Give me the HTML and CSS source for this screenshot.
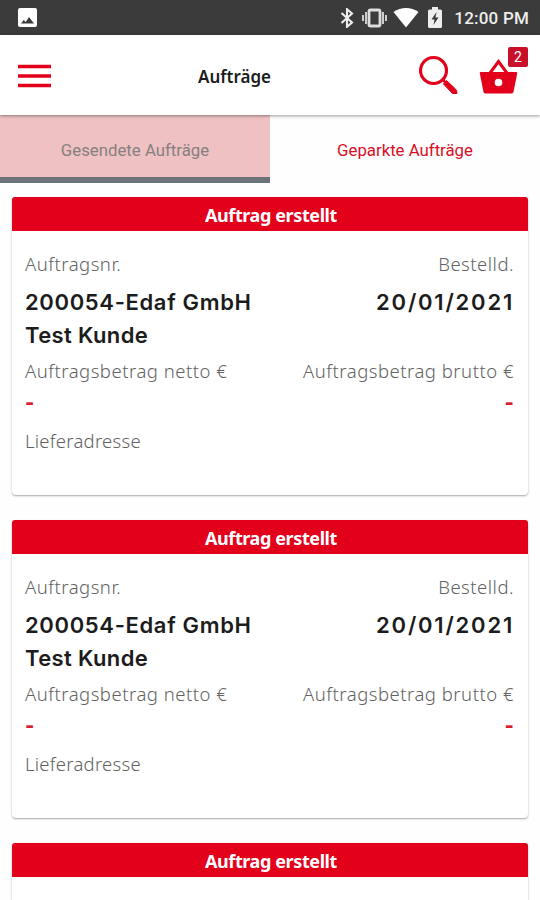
FILE: index.html
```html
<!DOCTYPE html>
<html lang="de">
<head>
  <meta charset="UTF-8">
  <title>Aufträge</title>
  <link rel="stylesheet" href="styles.css">
</head>
<body>
  <div class="statusbar">
    <svg class="status-photo" width="19" height="19" viewBox="0 0 19 19">
      <rect width="19" height="19" rx="2" fill="#fff"/>
      <path d="M3 15.500l2.700-3.500 2 2 3.300-5L16 15.500z" fill="#3a3b3a"/>
    </svg>
    <div class="status-right">
      <svg width="14" height="20" viewBox="0 0 14 20">
        <path d="M1.500 5l10.500 9.500L7 18.800V1.200L12 5.500 1.500 15" fill="none" stroke="#eee" stroke-width="2.100"/>
      </svg>
      <svg class="status-vibrate" width="25" height="20" viewBox="0 0 25 20">
        <rect x="7" y="2" width="11" height="16" rx="1.500" fill="none" stroke="#ddd" stroke-width="2.800"/>
        <path d="M4 4v12M21 4v12M1 7v6M24 7v6" stroke="#ccc" stroke-width="2"/>
      </svg>
      <svg class="status-wifi" width="26" height="20" viewBox="0 0 26 20">
        <path d="M.5 4C8-1.200 18-1.200 25.500 4L13 19.500z" fill="#fff"/>
      </svg>
      <svg class="status-battery" width="14" height="21" viewBox="0 0 14 21">
        <path d="M4 0h6v2.500h2.500Q14 2.500 14 4v15.500Q14 21 12.500 21h-11Q0 21 0 19.500V4Q0 2.500 1.500 2.500H4z" fill="#eee"/>
        <path d="M8.500 5L3.500 12.500h3L5.500 18l5-7.500h-3z" fill="#3a3b3a"/>
      </svg>
      <span class="clock">12:00 PM</span>
    </div>
  </div>

  <header class="header">
    <svg class="menu" width="33" height="24" viewBox="0 0 33 24">
      <path d="M0 2.500h33M0 12h33M0 21.500h33" stroke="#e3001b" stroke-width="3.400"/>
    </svg>
    <h1>Aufträge</h1>
    <svg class="search" width="40" height="40" viewBox="0 0 40 40">
      <circle cx="14.500" cy="15.500" r="13" fill="none" stroke="#e3001b" stroke-width="3.200"/>
      <path d="M27.500 25.500l9 8.500q1.500 1.500 1.500 4.500h-4.500l-9-9.500z" fill="#e3001b" stroke="#e3001b" stroke-linejoin="round"/>
      <path d="M23.500 24.500l4 4" stroke="#e3001b" stroke-width="2.500"/>
    </svg>
    <div class="basket">
      <svg width="39" height="36" viewBox="0 0 39 36">
        <path d="M11 14L19.500 2.500 28 14" fill="none" stroke="#e3001b" stroke-width="3"/>
        <path d="M2 13h35q1.500 0 1.200 1.600L34.500 33q-.6 1.500-2.500 1.500H7Q5 34.500 4.500 33L.8 14.600Q.5 13 2 13z" fill="#e3001b"/>
        <circle cx="19.500" cy="23.500" r="3.800" fill="#fff"/>
      </svg>
      <span class="badge">2</span>
    </div>
  </header>

  <nav class="tabs">
    <div class="tab active"><span>Gesendete Aufträge</span></div>
    <div class="tab"><span>Geparkte Aufträge</span></div>
  </nav>

  <main class="list">
    <section class="card">
      <h2>Auftrag erstellt</h2>
      <div class="card-body">
        <div class="row label"><span>Auftragsnr.</span><span>Bestelld.</span></div>
        <div class="row value">
          <div class="customer"><div>200054-Edaf GmbH</div><div class="name">Test Kunde</div></div>
          <span class="date">20/01/2021</span>
        </div>
        <div class="row label"><span>Auftragsbetrag netto €</span><span>Auftragsbetrag brutto €</span></div>
        <div class="row amount"><span>-</span><span>-</span></div>
        <div class="row label"><span class="address">Lieferadresse</span></div>
      </div>
    </section>

    <section class="card">
      <h2>Auftrag erstellt</h2>
      <div class="card-body">
        <div class="row label"><span>Auftragsnr.</span><span>Bestelld.</span></div>
        <div class="row value">
          <div class="customer"><div>200054-Edaf GmbH</div><div class="name">Test Kunde</div></div>
          <span class="date">20/01/2021</span>
        </div>
        <div class="row label"><span>Auftragsbetrag netto €</span><span>Auftragsbetrag brutto €</span></div>
        <div class="row amount"><span>-</span><span>-</span></div>
        <div class="row label"><span class="address">Lieferadresse</span></div>
      </div>
    </section>

    <section class="card last">
      <h2>Auftrag erstellt</h2>
    </section>
  </main>
</body>
</html>
```
FILE: styles.css
```css
* {
  box-sizing: border-box;
}

body {
  margin: 0;
  height: 900px;
  overflow: hidden;
  background-color: #fefefe;
  font-family: "Noto Sans", sans-serif;
  color: #1c1c1c;
}

svg {
  display: block;
  flex: none;
}

.statusbar {
  display: flex;
  justify-content: space-between;
  align-items: center;
  height: 35px;
  padding: 0 11px 0 18px;
  background-color: #3a3b3a;
}

.status-right {
  display: flex;
  align-items: center;
}

.status-vibrate {
  margin-left: 8px;
}

.status-wifi {
  margin-left: 6px;
}

.status-battery {
  margin: 0 12px 0 9px;
}

.clock {
  padding-top: 2px;
  font: 500 17px/35px Roboto, sans-serif;
  letter-spacing: 0.2px;
  color: #eee;
  white-space: nowrap;
}

.header {
  position: relative;
  display: flex;
  align-items: center;
  height: 80px;
  padding: 0 12px 0 18px;
  background-color: #fff;
  box-shadow: 0 1px 3px rgba(0, 0, 0, 0.4);
}

.menu {
  margin-top: 2px;
}

.header h1 {
  margin: 3px auto 0 147px;
  font-size: 17px;
  font-weight: 600;
}

.basket {
  position: relative;
  margin: 4px 10px 0 20px;
}

.badge {
  position: absolute;
  top: -12px;
  left: 29px;
  width: 20px;
  height: 20px;
  border-radius: 2px;
  background-color: #c8102a;
  color: #fff;
  font: 14px/20px Roboto, sans-serif;
  text-align: center;
}

.tabs {
  display: flex;
  height: 68px;
}

.tab {
  width: 50%;
  border-bottom: 6px solid transparent;
  font: 16.8px/70px Roboto, sans-serif;
  text-align: center;
  color: #d90e27;
}

.tab.active {
  background-color: #efc1c2;
  border-bottom-color: #6b7378;
  color: #858080;
}

.list {
  height: 717px;
  padding: 14px 12px 0;
  overflow: hidden;
}

.card {
  height: 298px;
  margin-bottom: 25px;
  border-radius: 4px;
  background-color: #fff;
  box-shadow: 0 1px 2px rgba(0, 0, 0, 0.35);
}

.card.last {
  height: 57px;
  margin-bottom: 0;
  border-radius: 4px 4px 0 0;
}

.card h2 {
  margin: 0;
  height: 34px;
  padding-left: 2px;
  border-radius: 3px 3px 0 0;
  background-color: #e3001b;
  color: #fff;
  font-size: 18px;
  letter-spacing: -0.4px;
  line-height: 37px;
  font-weight: 700;
  text-align: center;
}

.card-body {
  padding: 17px 14px 0 13px;
}

.row {
  display: flex;
  justify-content: space-between;
  white-space: nowrap;
}

.label {
  font-size: 18.5px;
  font-weight: 300;
  letter-spacing: 0.5px;
  line-height: 32px;
  color: #626262;
}

.value {
  margin-top: 6px;
  font: 600 22px/33px Inter, sans-serif;
}

.customer {
  letter-spacing: 0.65px;
}

.name {
  letter-spacing: 0.35px;
}

.date {
  letter-spacing: 1.8px;
}

.value + .label {
  margin-top: 3px;
}

.amount {
  margin-top: 1px;
  font: 700 24px/31px Roboto, sans-serif;
  color: #d6202e;
}

.amount + .label {
  margin-top: 6px;
}

.address {
  letter-spacing: 0.25px;
}
```
